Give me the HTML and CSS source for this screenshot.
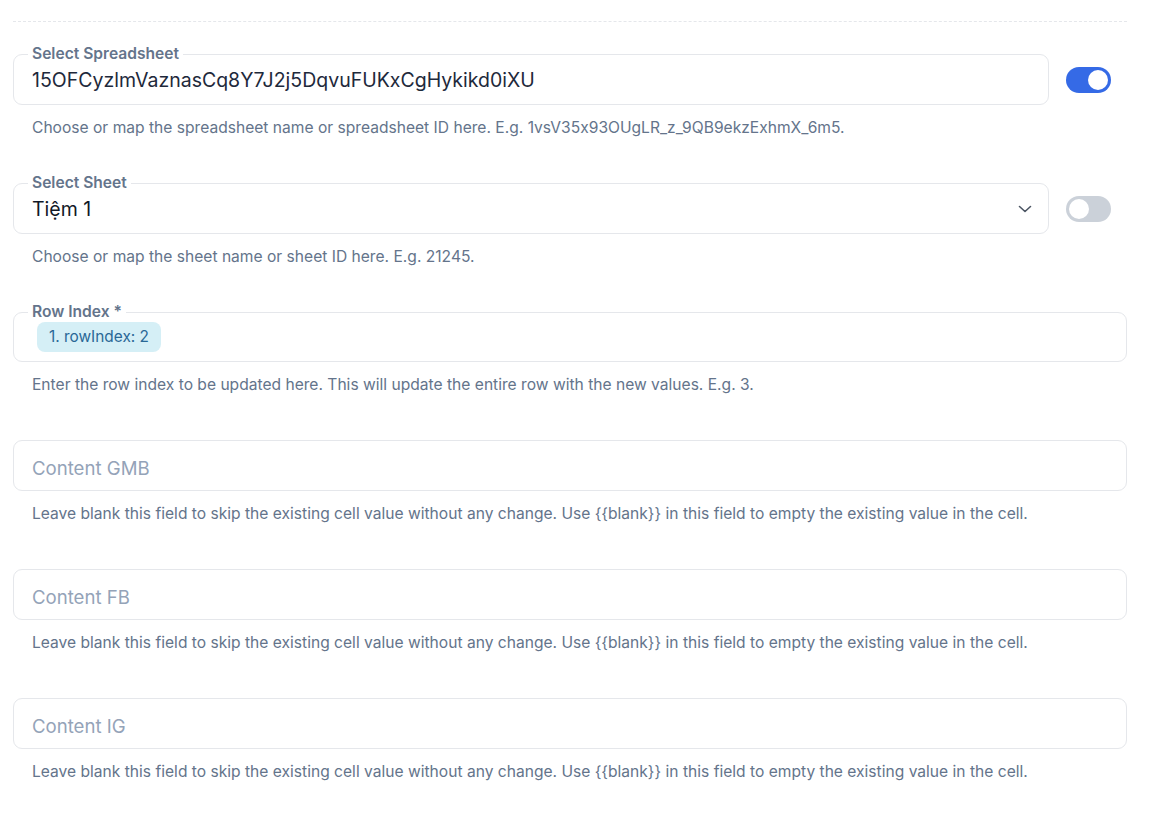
FILE: index.html
```html
<!DOCTYPE html>
<html lang="en">
<head>
<meta charset="utf-8">
<title>Update Row</title>
<link rel="stylesheet" href="styles.css">
</head>
<body>
<div class="page">
  <div class="divider"></div>

  <div class="group">
    <div class="row">
      <fieldset class="field">
        <legend class="label">Select Spreadsheet</legend>
        <div class="value">15OFCyzlmVaznasCq8Y7J2j5DqvuFUKxCgHykikd0iXU</div>
      </fieldset>
      <div class="toggle on"><span class="knob"></span></div>
    </div>
    <p class="help">Choose or map the spreadsheet name or spreadsheet ID here. E.g. 1vsV35x93OUgLR_z_9QB9ekzExhmX_6m5.</p>
  </div>

  <div class="group">
    <div class="row">
      <fieldset class="field">
        <legend class="label">Select Sheet</legend>
        <div class="select">
          <span class="value">Tiệm 1</span>
          <svg class="chevron" width="14" height="8" viewBox="0 0 14 8"><path d="M1.5 1.5 L7 6.5 L12.5 1.5" fill="none" stroke="#4b5563" stroke-width="1.6" stroke-linecap="round" stroke-linejoin="round"/></svg>
        </div>
      </fieldset>
      <div class="toggle"><span class="knob"></span></div>
    </div>
    <p class="help">Choose or map the sheet name or sheet ID here. E.g. 21245.</p>
  </div>

  <div class="group">
    <fieldset class="field chips">
      <legend class="label">Row Index *</legend>
      <span class="chip">1. rowIndex: 2</span>
    </fieldset>
    <p class="help">Enter the row index to be updated here. This will update the entire row with the new values. E.g. 3.</p>
  </div>

  <div class="group plain">
    <div class="box"><span class="placeholder">Content GMB</span></div>
    <p class="help">Leave blank this field to skip the existing cell value without any change. Use {{blank}} in this field to empty the existing value in the cell.</p>
  </div>

  <div class="group plain">
    <div class="box"><span class="placeholder">Content FB</span></div>
    <p class="help">Leave blank this field to skip the existing cell value without any change. Use {{blank}} in this field to empty the existing value in the cell.</p>
  </div>

  <div class="group plain">
    <div class="box"><span class="placeholder">Content IG</span></div>
    <p class="help">Leave blank this field to skip the existing cell value without any change. Use {{blank}} in this field to empty the existing value in the cell.</p>
  </div>
</div>
</body>
</html>
```

FILE: styles.css
```css
* { box-sizing: border-box; }
html, body { margin: 0; padding: 0; background: #ffffff; }
body {
  font-family: Inter, "Noto Sans", "Liberation Sans", sans-serif;
  font-feature-settings: "calt" 0;
  color: #1f2937;
}
.page {
  width: 1114px;
  margin-left: 13px;
  padding-top: 21px;
  display: flex;
  flex-direction: column;
}
.divider {
  border-top: 1px dashed #e5e7eb;
  margin-bottom: 24px;
}
.group { margin-bottom: 37px; }
.group.plain { margin-top: 8px; }
.row {
  display: flex;
  gap: 17px;
  padding-right: 16px;
}
.field {
  flex: 1;
  margin: 0;
  min-width: 0;
  border: 1px solid #e5e7eb;
  border-radius: 9px;
  padding: 6px 18px 12px;
}
.label {
  padding: 0 4px;
  margin-left: -4px;
  font-size: 15.6px;
  line-height: 16px;
  font-weight: 600;
  color: #64748b;
}
.value {
  font-size: 19.5px;
  line-height: 24px;
  color: #1e293b;
}
.select {
  display: flex;
  align-items: center;
  justify-content: space-between;
  margin-right: -2px;
}
.select .value { color: #111827; }
.chevron { display: block; }
.toggle {
  align-self: flex-end;
  margin-bottom: 12px;
  width: 45px;
  height: 26px;
  border-radius: 13px;
  background: #cbd1d9;
  padding: 3px;
  display: flex;
}
.toggle.on {
  background: #356ae6;
  justify-content: flex-end;
}
.knob {
  width: 20px;
  height: 20px;
  border-radius: 50%;
  background: #ffffff;
}
.chips {
  padding: 2px 18px 9px;
}
.chip {
  display: inline-block;
  margin-left: 5px;
  height: 30px;
  line-height: 30px;
  padding: 0 12px;
  border-radius: 8px;
  background: #d5eff6;
  color: #2a6896;
  font-size: 15.4px;
}
.help {
  margin: 12px 0 0 19px;
  font-size: 15.6px;
  line-height: 21px;
  color: #64748b;
}
.box {
  height: 51px;
  border: 1px solid #e5e7eb;
  border-radius: 9px;
  padding: 5px 18px 0;
  display: flex;
  align-items: center;
}
.placeholder {
  font-size: 18.6px;
  color: #94a3b8;
}
```
